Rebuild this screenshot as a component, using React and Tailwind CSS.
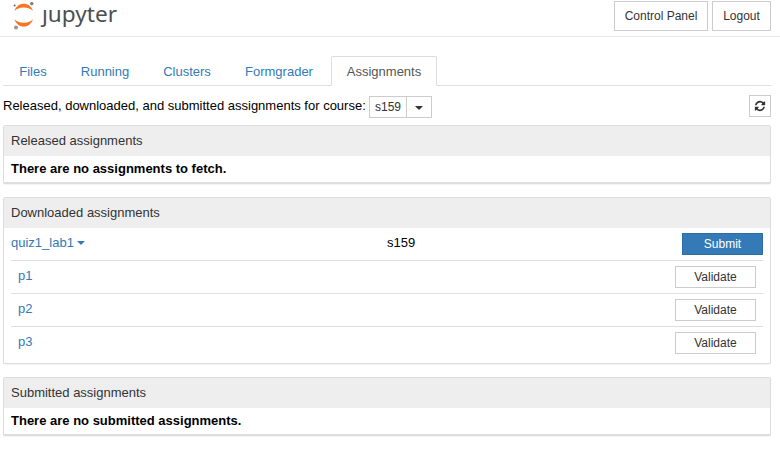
const outlineButton =
  'flex items-center justify-center border border-[#ccc] bg-white text-xs text-[#333]';

function Logo() {
  return (
    <div className="flex h-9 items-start">
      <svg width="24" height="32" viewBox="0 0 24 32" className="shrink-0">
        <path d="M2.400 10.900C4 6.400 7.500 3.800 11.700 3.800s7.700 2.600 9.300 7.100C19 8.800 15.600 7.500 11.700 7.500s-7.300 1.300-9.300 3.400z" fill="#f37726" />
        <path d="M2.400 19.200C4 23.800 7.500 26.600 11.700 26.600s7.700-2.800 9.300-7.400c-2 2.200-5.400 3.500-9.300 3.500s-7.300-1.300-9.300-3.500z" fill="#f37726" />
        <circle cx="19.800" cy="3.600" r="1.700" fill="#767677" />
        <circle cx="2.600" cy="5.600" r="1" fill="#616262" />
        <circle cx="4" cy="27.500" r="2" fill="#989798" />
      </svg>
      <svg width="84" height="36" viewBox="0 0 84 36" overflow="visible" className="ml-1">
        <text x="2" y="21.600" textLength="75" lengthAdjust="spacingAndGlyphs" fontFamily="'Noto Sans', sans-serif" fontSize="22.500" fill="#4e4e4e">
          ȷupyter
        </text>
      </svg>
    </div>
  );
}

function Caret({ className }) {
  return (
    <svg width="8" height="4" viewBox="0 0 8 4" className={className}>
      <path d="M0 0h8L4 4z" fill="currentColor" />
    </svg>
  );
}

function Tab({ children, active, width }) {
  return (
    <a
      className={`${width} flex h-[30px] items-center justify-center border pt-0.5 ${
        active
          ? '-mb-px rounded-t-[2px] border-[#ddd] border-b-white bg-white text-[#555]'
          : 'border-transparent text-[#337ab7]'
      }`}
    >
      {children}
    </a>
  );
}

function Panel({ title, size, children }) {
  return (
    <section className={`${size} rounded-[2px] border-[#ddd] bg-white shadow-[0_1px_1px_rgba(0,0,0,0.05)]`}>
      <h2 className="flex h-[30px] items-center bg-[#eee] px-[7px] text-[#333]">{title}</h2>
      {children}
    </section>
  );
}

function Problem({ name, last }) {
  return (
    <div className={`flex h-[33px] items-start justify-between px-[7px] pt-[5px] ${last ? '' : 'border-b border-[#ddd]'}`}>
      <a className="leading-[19px] text-[#337ab7]">{name}</a>
      <button className={`${outlineButton} h-[22px] w-[81px]`}>Validate</button>
    </div>
  );
}

export default function App() {
  return (
    <div className="h-[462px] w-[780px] bg-white font-['Liberation_Sans',Arial,sans-serif] text-[13px] leading-[18px] text-black">
      <header className="flex h-[37px] items-start justify-between border-b border-[#e7e7e7] pr-[9px] pl-3">
        <Logo />
        <div className="flex gap-1 pt-px">
          <button className={`${outlineButton} h-[30px] w-[94px]`}>Control Panel</button>
          <button className={`${outlineButton} h-[30px] w-[59px]`}>Logout</button>
        </div>
      </header>
      <main className="pr-[9px] pl-[3px]">
        <nav className="mt-[19px] flex h-[30px] border-b border-[#ddd]">
          <Tab width="w-[60px]">Files</Tab>
          <Tab width="ml-[2px] w-[80px]">Running</Tab>
          <Tab width="ml-[2px] w-[80px]">Clusters</Tab>
          <Tab width="ml-[2px] w-[100px]">Formgrader</Tab>
          <Tab width="ml-[2px] w-[106px]" active>Assignments</Tab>
        </nav>
        <div className="flex h-[39px] items-start pt-[9px]">
          <span className="w-[366px] whitespace-nowrap pt-0.5">
            Released, downloaded, and submitted assignments for course:
          </span>
          <div className="mt-px flex">
            <button className={`${outlineButton} h-[22px] w-[38px]`}>s159</button>
            <button className={`${outlineButton} -ml-px h-[22px] w-[26px]`}>
              <Caret className="mt-px" />
            </button>
          </div>
          <button className={`${outlineButton} ml-auto size-[22px]`} aria-label="Refresh">
            <svg width="12" height="12" viewBox="0 0 1792 1792" fill="currentColor">
              <path d="M1639 1056q0 5-1 7-64 268-268 434.500t-478 166.500q-146 0-282.500-55t-243.500-157l-129 129q-19 19-45 19t-45-19-19-45v-448q0-26 19-45t45-19h448q26 0 45 19t19 45-19 45l-137 137q71 66 161 102t187 36q134 0 250-65t186-179q11-17 53-117 8-23 30-23h192q13 0 22.500 9.500t9.500 22.500zm25-800v448q0 26-19 45t-45 19h-448q-26 0-45-19t-19-45 19-45l138-138q-148-137-349-137-134 0-250 65t-186 179q-11 17-53 117-8 23-30 23h-199q-13 0-22.500-9.500t-9.500-22.500v-7q65-268 270-434.500t480-166.500q146 0 284 55.500t245 156.500l130-129q19-19 45-19t45 19 19 45z" />
            </svg>
          </button>
        </div>
        <div className="flex flex-col gap-[13px]">
          <Panel title="Released assignments" size="h-[59px] border border-b-2">
            <p className="px-[7px] pt-1 font-bold">There are no assignments to fetch.</p>
          </Panel>
          <Panel title="Downloaded assignments" size="h-[167px] border">
            <div className="px-[7px]">
              <div className="flex h-[33px] items-start border-b border-[#ddd] pt-[5px]">
                <a className="flex w-[376px] items-center leading-[19px] text-[#337ab7]">
                  quiz1_lab1
                  <Caret className="ml-[3px]" />
                </a>
                <span className="leading-[19px]">s159</span>
                <button className="ml-auto h-[22px] w-[81px] border border-[#2e6da4] bg-[#337ab7] text-xs text-white">
                  Submit
                </button>
              </div>
              <Problem name="p1" />
              <Problem name="p2" />
              <Problem name="p3" last />
            </div>
          </Panel>
          <Panel title="Submitted assignments" size="h-[59px] border border-b-2">
            <p className="px-[7px] pt-1 font-bold">There are no submitted assignments.</p>
          </Panel>
        </div>
      </main>
    </div>
  );
}
